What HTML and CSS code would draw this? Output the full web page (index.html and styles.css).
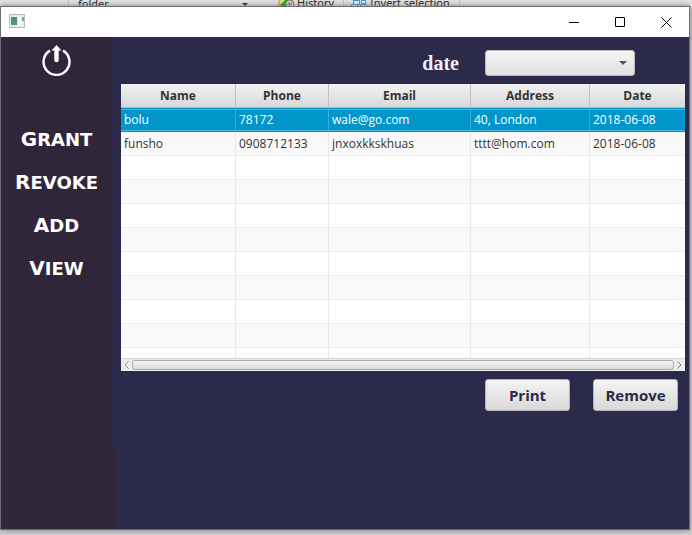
FILE: index.html
```html
<!DOCTYPE html>
<html lang="en">
<head>
<meta charset="utf-8">
<title>Records</title>
<link rel="stylesheet" href="styles.css">
</head>
<body>
<div class="ribbon">
  <span class="ribbon-folder">folder</span>
  <svg class="ribbon-arrow" viewBox="0 0 6 3"><path d="M0 0h6L3 3z" fill="#222"/></svg>
  <span class="ribbon-item">
    <svg class="ribbon-icon" viewBox="0 0 16 16"><path d="M1 0h14v15H1z" fill="#f1df6c" stroke="#a9973e"/><circle cx="11" cy="13" r="5" fill="#ddd" stroke="#666"/><path d="M11 10v3l3-2" stroke="#555" fill="none"/><path d="M9 8l-5 5h3l-3 3" stroke="#16a52c" stroke-width="2.500" fill="none"/></svg>
    History
  </span>
  <span class="ribbon-item">
    <svg class="ribbon-icon" viewBox="0 0 16 16"><path d="M2.500 8.500h6v4h-6zM.5 12.500h6v4h-6zM9.500 12.500h6v4h-6z" fill="#e5f3ff" stroke="#3c91d0"/><path d="M10.500 8.500h4v3h-4z" fill="#fff" stroke="#3c91d0"/></svg>
    Invert selection
  </span>
</div>
<div class="window">
  <header class="titlebar">
    <svg class="app-icon" viewBox="0 0 16 14"><defs><linearGradient id="screen" x2="0" y2="1"><stop offset="0" stop-color="#4f83a3"/><stop offset="1" stop-color="#43a06d"/></linearGradient></defs><path d="M.5.5h15v13H.5z" fill="#eceeef" stroke="#b4babd"/><path d="M2 3h6v8H2z" fill="url(#screen)"/><path d="M9 3h3v8H9z" fill="#fff"/><path d="M13 3h2v4h-2z" fill="#76aa98"/></svg>
    <div class="window-controls">
      <button type="button" aria-label="Minimize"><svg viewBox="0 0 11 11"><path d="M0 5.500h10" stroke="#000"/></svg></button>
      <button type="button" aria-label="Maximize"><svg viewBox="0 0 11 11"><path d="M.5.5h9v9h-9z" fill="none" stroke="#000"/></svg></button>
      <button type="button" aria-label="Close"><svg viewBox="0 0 11 11"><path d="M.5.5l10 10M10.500.5l-10 10" stroke="#000"/></svg></button>
    </div>
  </header>
  <div class="content">
    <nav class="sidebar">
      <button type="button" class="power" aria-label="Log out">
        <svg viewBox="0 0 30 32"><path d="M8 6.600A13 13 0 1 0 21 6.600" fill="none" stroke="#fff" stroke-width="2.400"/><path d="M14.500 1l5 5.500h-2.800v9.500a2.200 2.200 0 0 1-4.400 0V6.500H9.500z" fill="#fff"/></svg>
      </button>
      <a class="nav-link" href="#grant">Grant</a>
      <a class="nav-link" href="#revoke">Revoke</a>
      <a class="nav-link" href="#add">Add</a>
      <a class="nav-link" href="#view">View</a>
    </nav>
    <main class="main">
      <div class="filter">
        <label for="date">date</label>
        <div class="combo">
          <select id="date"><option></option></select>
          <svg viewBox="0 0 8 4"><path d="M0 0h8L4 4z" fill="#555"/></svg>
        </div>
      </div>
      <div class="grid">
        <table>
          <colgroup><col class="col-name"><col class="col-phone"><col class="col-email"><col class="col-address"><col class="col-date"></colgroup>
          <thead><tr><th>Name</th><th>Phone</th><th>Email</th><th>Address</th><th>Date</th></tr></thead>
          <tbody>
            <tr class="selected"><td>bolu</td><td>78172</td><td>wale@go.com</td><td>40, London</td><td>2018-06-08</td></tr>
            <tr><td>funsho</td><td>0908712133</td><td>jnxoxkkskhuas</td><td>tttt@hom.com</td><td>2018-06-08</td></tr>
            <tr><td></td><td></td><td></td><td></td><td></td></tr>
            <tr><td></td><td></td><td></td><td></td><td></td></tr>
            <tr><td></td><td></td><td></td><td></td><td></td></tr>
            <tr><td></td><td></td><td></td><td></td><td></td></tr>
            <tr><td></td><td></td><td></td><td></td><td></td></tr>
            <tr><td></td><td></td><td></td><td></td><td></td></tr>
            <tr><td></td><td></td><td></td><td></td><td></td></tr>
            <tr><td></td><td></td><td></td><td></td><td></td></tr>
            <tr class="partial"><td></td><td></td><td></td><td></td><td></td></tr>
          </tbody>
        </table>
        <div class="scrollbar">
          <button type="button" aria-label="Scroll left"><svg viewBox="0 0 5 8"><path d="M4.500.5L1 4l3.500 3.500" fill="none" stroke="#888"/></svg></button>
          <div class="thumb"></div>
          <button type="button" aria-label="Scroll right"><svg viewBox="0 0 5 8"><path d="M.5.5L4 4 .5 7.500" fill="none" stroke="#777"/></svg></button>
        </div>
      </div>
      <div class="actions">
        <button type="button">Print</button>
        <button type="button">Remove</button>
      </div>
    </main>
  </div>
</div>
</body>
</html>
```
FILE: styles.css
```css
* { box-sizing: border-box; }

body {
  margin: 0;
  min-height: 100vh;
  display: flex;
  flex-direction: column;
  padding: 0 2px 5px 0;
  background: #d2d2d3;
  font: 12px/16px "Open Sans", "Noto Sans", sans-serif;
  color: #333;
}

button { font: inherit; border: 0; padding: 0; background: none; }
svg { display: block; }

.ribbon {
  display: flex;
  align-items: flex-end;
  height: 6px;
  margin-right: -2px;
  padding-left: 68px;
  overflow: hidden;
  background: #e3e4e5;
  font: 11px/8px "Noto Sans", sans-serif;
  color: #222;
}
.ribbon-folder {
  width: 174px;
  height: 6px;
  padding-left: 9px;
  border-left: 1px solid #c8c9ca;
}
.ribbon-arrow { width: 6px; height: 3px; margin-right: 30px; }
.ribbon-item {
  display: flex;
  align-items: flex-start;
  gap: 3px;
  height: 6px;
  line-height: 6px;
  padding-right: 9px;
  margin-right: 7px;
  border-right: 1px solid #c8c9ca;
  white-space: nowrap;
}
.ribbon-icon { width: 16px; height: 16px; flex: none; margin-top: -8px; }

.window {
  flex: 1;
  display: flex;
  flex-direction: column;
  border: 1px solid #6b6b70;
  box-shadow: 0 0 6px #77777c;
}

.titlebar {
  display: flex;
  align-items: center;
  justify-content: space-between;
  height: 30px;
  padding-left: 8px;
  background: #fff;
}
.app-icon { width: 16px; height: 14px; margin-bottom: 3px; }
.window-controls { display: flex; }
.window-controls button { width: 46px; height: 30px; }
.window-controls svg { width: 11px; height: 11px; margin: 0 auto; }

.content { flex: 1; display: flex; background: #2c2a4a; }

.sidebar {
  position: relative;
  width: 111px;
  flex: none;
  display: flex;
  flex-direction: column;
  align-items: center;
  padding-top: 7px;
  background: #30263a;
}
.sidebar::after {
  content: "";
  position: absolute;
  top: 413px;
  bottom: 0;
  left: 100%;
  width: 5px;
  background: #30263a;
}
.power { height: 32px; margin-bottom: 42px; }
.power svg { width: 30px; height: 32px; }
.nav-link {
  display: block;
  height: 43px;
  font: bold 18px/43px "DejaVu Sans", sans-serif;
  color: #fff;
  text-transform: uppercase;
  text-decoration: none;
}
.nav-link::first-letter { font-size: 20px; }

.main { flex: 1; min-width: 0; padding: 13px 4px 0 9px; }

.filter {
  display: flex;
  justify-content: flex-end;
  align-items: center;
  gap: 26px;
  height: 26px;
  margin: 0 50px 8px 0;
}
.filter label { font: bold 20px/24px "Liberation Serif", serif; color: #f4eefa; }

.combo { position: relative; width: 150px; }
.combo select {
  display: block;
  width: 100%;
  height: 26px;
  appearance: none;
  border: 1px solid #b9b9be;
  border-radius: 3px;
  background: linear-gradient(#f5f5f5, #e0e0e0);
}
.combo svg { position: absolute; right: 8px; top: 11px; width: 8px; height: 4px; pointer-events: none; }

.grid { background: #fff; }
table { width: 100%; table-layout: fixed; border-collapse: separate; border-spacing: 0; }
.col-name { width: 115px; }
.col-phone { width: 93px; }
.col-email { width: 142px; }
.col-address { width: 119px; }
th {
  height: 24px;
  padding: 0;
  font-weight: bold;
  line-height: 23px;
  border-right: 1px solid #c0c0c0;
  border-bottom: 1px solid #b8b8b8;
  background: linear-gradient(#f1f1f1, #d9d9d9);
}
td {
  height: 24px;
  padding: 0 3px;
  line-height: 23px;
  border-right: 1px solid #e8e8e8;
  border-bottom: 1px solid #ececec;
  white-space: nowrap;
  overflow: hidden;
}
th:last-child, td:last-child { border-right: 0; }
tbody tr:nth-child(even) { background: #f9f9f9; }
.selected td {
  color: #fff;
  background: #0096c9;
  border-right-color: #36abd5;
  border-bottom-color: #0096c9;
  box-shadow: inset 0 1px #0096c9, inset 0 2px #46b2d8, inset 0 -1px #46b2d8;
}
.partial td { height: 10px; border-bottom: 0; }

.scrollbar {
  display: flex;
  align-items: center;
  height: 13px;
  padding: 1px 0;
  border-top: 1px solid #d5d5d5;
  background: #ececec;
}
.scrollbar button { width: 11px; height: 11px; }
.scrollbar svg { width: 5px; height: 8px; margin: 0 auto; }
.thumb {
  flex: 1;
  height: 10px;
  border: 1px solid #aaa;
  border-radius: 3px;
  background: linear-gradient(#f4f4f4, #d9d9d9);
}

.actions { display: flex; justify-content: flex-end; gap: 23px; padding: 8px 7px 0 0; }
.actions button {
  width: 85px;
  height: 32px;
  border: 1px solid #b2b2bc;
  border-radius: 3px;
  background: linear-gradient(#f3f3f3, #d9d9d9);
  font: bold 15px/20px "Open Sans", "Noto Sans", sans-serif;
  color: #2c2a4a;
}
```
